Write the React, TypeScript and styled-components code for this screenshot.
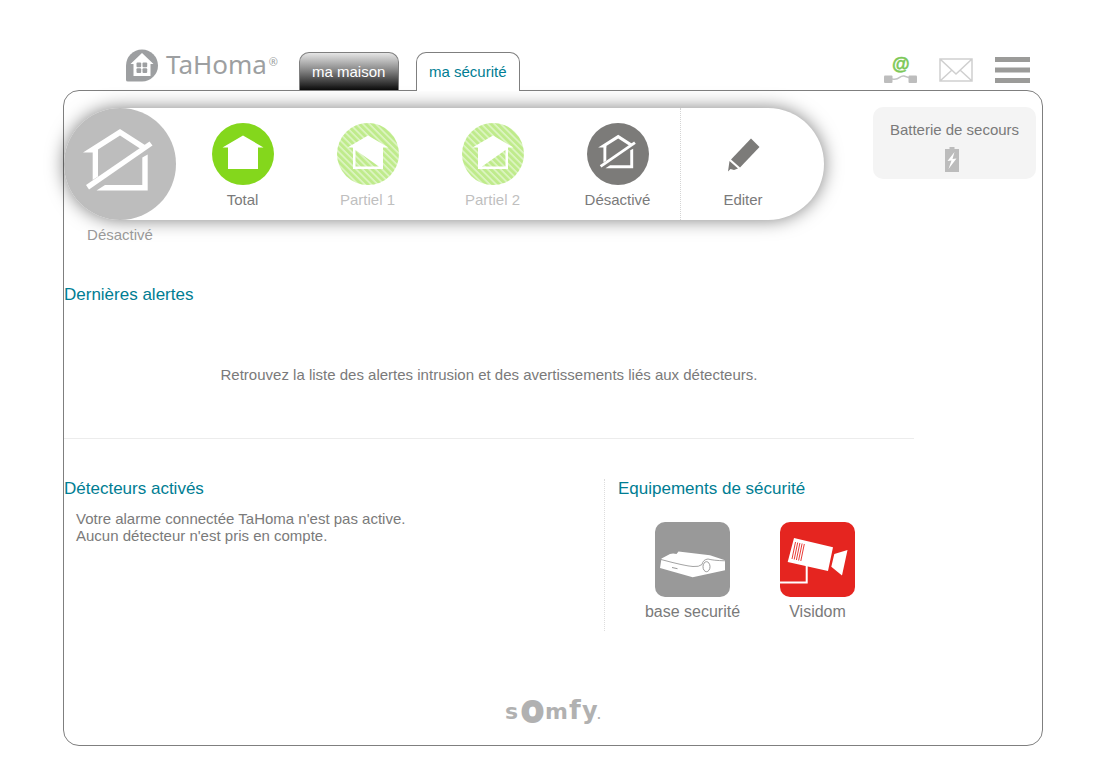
import React from "react";
import styled, { createGlobalStyle, css } from "styled-components";

const GlobalStyle = createGlobalStyle`
  * { box-sizing: border-box; }
  body {
    margin: 0;
    background: #fff;
    color: #7a7a7a;
    font: 15px/17px "Liberation Sans", Arial, sans-serif;
  }
  h1, h2, p, ul { margin: 0; padding: 0; }
  button { border: 0; padding: 0; background: none; font: inherit; color: inherit; cursor: pointer; }
  svg { display: block; }
`;

const Page = styled.div`
  padding: 49px 61px 29px 63px;
`;

const Header = styled.header`
  display: flex;
  align-items: flex-end;
  padding-right: 13px;
`;

const Brand = styled.a`
  display: flex;
  align-items: flex-start;
  width: 173px;
  margin: 0 0 8px 63px;
  gap: 8px;
  color: #9d9fa1;
  text-decoration: none;
`;

const BrandName = styled.span`
  font: 26px/30px "Noto Sans", "Open Sans", sans-serif;
  white-space: nowrap;
`;

const Registered = styled.sup`
  margin-left: 2px;
  font-size: 11px;
  line-height: 11px;
  vertical-align: 8px;
`;

const Tabs = styled.nav`
  display: flex;
  align-items: flex-end;
  gap: 17px;
`;

const Tab = styled.a<{ $active?: boolean }>`
  min-width: 100px;
  height: 38px;
  padding: 10px 12px 0;
  border: 1px solid #7f7f7f;
  border-bottom: 0;
  border-radius: 10px 10px 0 0;
  text-decoration: none;
  white-space: nowrap;
  color: #fff;
  background: linear-gradient(#e6e6e6, #8a8a8a 45%, #0c0c0c);
  ${({ $active }) =>
    $active &&
    css`
      position: relative;
      height: 39px;
      margin-bottom: -1px;
      color: #007d93;
      background: #fff;
    `}
`;

const Tools = styled.div`
  display: flex;
  align-items: center;
  gap: 22px;
  margin: 0 0 4px auto;
`;

const Panel = styled.main`
  display: flex;
  flex-direction: column;
  border: 1px solid #7f7f7f;
  border-radius: 16px;
  padding-top: 16px;
`;

const AlarmRow = styled.section`
  display: flex;
  justify-content: space-between;
  align-items: flex-start;
  gap: 48px;
  padding-right: 6px;
`;

const AlarmBlock = styled.div`
  flex: 0 1 760px;
  padding-top: 1px;
`;

const AlarmBar = styled.div`
  display: flex;
  height: 112px;
  border-radius: 56px;
  background: #fff;
  box-shadow: 0 0 18px rgba(0, 0, 0, 0.5);
`;

const StatusDisc = styled.div`
  width: 112px;
  margin-right: 4px;
  border-radius: 50%;
  background: #bdbdbd;
`;

const StatusLabel = styled.p`
  width: 112px;
  margin-top: 6px;
  text-align: center;
  color: #999;
`;

const ModeButton = styled.button<{ $faded?: boolean; $divided?: boolean }>`
  display: flex;
  flex-direction: column;
  align-items: center;
  justify-content: flex-start;
  gap: 6px;
  width: 125px;
  padding-top: 15px;
  color: ${({ $faded }) => ($faded ? "#bfbfbf" : "#7a7a7a")};
  border-left: ${({ $divided }) => ($divided ? "1px dotted #d4d4d4" : "0")};
`;

const BatteryCard = styled.aside`
  display: flex;
  flex-direction: column;
  align-items: center;
  gap: 9px;
  width: 163px;
  height: 72px;
  padding-top: 14px;
  border-radius: 10px;
  background: #f4f4f4;
`;

const Heading = styled.h2`
  font-size: 17px;
  font-weight: normal;
  line-height: 20px;
  color: #007d93;
`;

const Alerts = styled.section`
  margin: 42px 128px 0 0;
  border-bottom: 1px solid #ececec;
`;

const AlertsMessage = styled.p`
  padding: 61px 0 55px;
  text-align: center;
`;

const Columns = styled.div`
  display: flex;
  margin: 40px 128px 0 0;
  min-height: 152px;
`;

const Detectors = styled.section`
  flex: 1;
`;

const DetectorsText = styled.p`
  padding: 11px 12px;
`;

const Equipment = styled.section`
  width: 310px;
  padding-left: 13px;
  border-left: 1px dotted #ddd;
`;

const Devices = styled.ul`
  display: flex;
  padding: 23px 0 0 12px;
  list-style: none;
`;

const DeviceButton = styled.button`
  display: flex;
  flex-direction: column;
  align-items: center;
  gap: 6px;
  width: 125px;
  font-size: 16px;
  line-height: 18px;
`;

const Footer = styled.footer`
  display: flex;
  justify-content: center;
  padding: 52px 0 10px;
`;

const HouseOff = () => (
  <g fill="#fff">
    <path d="M19 44.500 L56 21 L82.500 38 L77.500 41.500 L56 27.500 L34 41.500 V44.500 Z" />
    <path d="M28.700 42 H34 V68.500 L28.700 72 Z" />
    <path d="M22 77 L85.500 33.500 L88.500 37.500 L25 81.500 Z" />
    <path d="M83.700 46.500 V82.500 H32.500 L41 77 H78.300 V49.500 Z" />
  </g>
);

const ModeIcon = ({ kind }: { kind: "total" | "left" | "right" | "off" }) => {
  const faded = kind === "left" || kind === "right";
  const stripes = `stripes-${kind}`;
  const fill = kind === "off" ? "#7c7b79" : kind === "total" ? "#84d71c" : `url(#${stripes})`;
  return (
    <svg width="62" height="62" viewBox="0 0 62 62" aria-hidden="true">
      {faded && (
        <defs>
          <pattern id={stripes} width="4.600" height="4.600" patternUnits="userSpaceOnUse" patternTransform="rotate(45)">
            <rect width="4.600" height="4.600" fill="#bfeb8b" />
            <rect width="4.600" height="1.600" fill="#dff5c6" />
          </pattern>
        </defs>
      )}
      <circle cx="31" cy="31" r="31" fill={fill} />
      {kind === "off" ? (
        <g transform="translate(0.900 0.500) scale(0.541)">
          <HouseOff />
        </g>
      ) : (
        <path d="M31 12.500 L51.500 24.500 H46 V46 H16 V24.500 H10.500 Z" fill="#fff" />
      )}
      {faded && (
        <path
          d={kind === "left" ? "M18.500 27 L42 43.500 H18.500 Z" : "M43.500 27 V43.500 H20 Z"}
          fill={`url(#${stripes})`}
        />
      )}
    </svg>
  );
};

const PencilIcon = () => (
  <svg width="62" height="62" viewBox="0 0 62 62" aria-hidden="true">
    <g fill="#7c7b79">
      <path d="M39 15.500 L47.500 24 L28 44.500 L19 36.500 Z" />
      <path d="M17.500 38 L26 45.500 L22 47 L18.500 46 L16 48.500 Z" />
    </g>
  </svg>
);

const LogoMark = () => (
  <svg width="32" height="33" viewBox="0 0 32 33" aria-hidden="true">
    <path d="M0 31 V16.500 A16 16 0 1 1 16 32.500 H2 Q0 32.500 0 31 Z" fill="#9d9fa1" />
    <path d="M16 4 L27.500 15 H24.500 V27 H7.500 V15 H4.500 Z" fill="#fff" />
    <g fill="#9d9fa1">
      <rect x="10.500" y="13.500" width="4.700" height="4.700" rx="1" />
      <rect x="16.500" y="13.500" width="4.700" height="4.700" rx="1" />
      <rect x="10.500" y="19.300" width="4.700" height="4.700" rx="1" />
      <rect x="16.500" y="19.300" width="4.700" height="4.700" rx="1" />
    </g>
  </svg>
);

const ConnectionIcon = () => (
  <svg width="33" height="32" viewBox="0 -3 33 32" aria-hidden="true">
    <text x="16.500" y="13" textAnchor="middle" fontSize="18" fontWeight="bold" fontStyle="italic" fontFamily="Liberation Sans, Arial, sans-serif" fill="#7cc857" stroke="#7cc857" strokeWidth="0.500">@</text>
    <path d="M8 22 C16 24 15 18 20 19 L26 21" fill="none" stroke="#c4c4c4" strokeWidth="1.500" />
    <rect y="18.500" width="8.500" height="7.500" rx="1" fill="#bdbdbd" />
    <rect x="24.500" y="18.500" width="8.500" height="7.500" rx="1" fill="#bdbdbd" />
  </svg>
);

const MailIcon = () => (
  <svg width="34" height="24" viewBox="0 0 34 24" aria-hidden="true">
    <path d="M1 1 H33 V23 H1 Z M1 1 L17 16 L33 1 M1 23 L13 12 M33 23 L21 12" fill="none" stroke="#cfcfcf" strokeWidth="1.500" />
  </svg>
);

const MenuIcon = () => (
  <svg width="35" height="26" viewBox="0 0 35 26" aria-hidden="true">
    <path d="M0 2.500 H35 M0 13 H35 M0 23.500 H35" stroke="#9b9b99" strokeWidth="5" />
  </svg>
);

const BatteryIcon = () => (
  <svg width="20" height="25" viewBox="0 0 20 25" aria-hidden="true">
    <path d="M0 2 H4.500 V0 H9.500 V2 H14 V25 H0 Z" fill="#bcbcbc" />
    <path d="M9.500 5 L2.500 14 L6.500 13.500 L3.500 22 L11.500 11.500 L7.500 12 Z" fill="#fff" />
  </svg>
);

const BaseDevice = () => (
  <svg width="75" height="75" viewBox="0 0 75 75" aria-hidden="true">
    <rect width="75" height="75" rx="10" fill="#999" />
    <path d="M6.500 36.500 L15 32 Q18 31 21.500 32 L23.500 29.500 L55 33.300 L70 38.300 V48.300 L37.700 55.300 L5 46 Z" fill="#fff" />
    <path d="M6 37.500 Q30 44 38 44.500 Q44 45 47 42.500 Q48 37.500 53 37 Q58 38.500 70 38.800" fill="none" stroke="#999" strokeWidth="0.900" />
    <ellipse cx="51.500" cy="44.700" rx="3.500" ry="5" fill="#fff" stroke="#999" />
    <path d="M17 45.500 L22.500 46.700" stroke="#999" />
  </svg>
);

const CameraDevice = () => (
  <svg width="75" height="75" viewBox="0 0 75 75" aria-hidden="true">
    <rect width="75" height="75" rx="10" fill="#e52520" />
    <path d="M14 16 L53 25.300 L48 49 L7.700 40 Z M54.300 32 L67.500 28 L62 53.500 L51.300 44.700 Z" fill="#fff" />
    <path d="M26.700 43 V60.500 H0" fill="none" stroke="#fff" strokeWidth="2" />
    <path
      d="M15.500 20 L12 37 M17.700 20.500 L14.200 37.500 M19.900 21 L16.400 38 M22.100 21.500 L18.600 38.500 M24.300 22 L20.800 39"
      stroke="#e52520"
      strokeWidth="0.900"
    />
  </svg>
);

const SomfyLogo = () => (
  <svg width="98" height="52" viewBox="0 -16 98 52" role="img" aria-label="somfy" fill="#b1b1b1" fontFamily="DejaVu Sans, sans-serif">
    <text y="20" fontSize="22" fontWeight="bold">
      <tspan x="1">s</tspan>
      <tspan x="18" y="22" fontSize="37" fontFamily="Lato, sans-serif" stroke="#b1b1b1" strokeWidth="4" strokeLinejoin="round" fontWeight="normal">o</tspan>
      <tspan x="41" y="20">m</tspan>
      <tspan x="65" fontSize="27">f</tspan>
      <tspan x="78" fontSize="24">y</tspan>
      <tspan x="93" fontSize="10">.</tspan>
    </text>
  </svg>
);

const App: React.FC = () => (
  <>
    <GlobalStyle />
    <Page>
      <Header>
        <Brand href="#">
          <LogoMark />
          <BrandName>TaHoma<Registered>®</Registered></BrandName>
        </Brand>
        <Tabs>
          <Tab href="#maison">ma maison</Tab>
          <Tab href="#securite" $active>ma sécurité</Tab>
        </Tabs>
        <Tools>
          <button aria-label="Connexion"><ConnectionIcon /></button>
          <button aria-label="Messages"><MailIcon /></button>
          <button aria-label="Menu"><MenuIcon /></button>
        </Tools>
      </Header>
      <Panel>
        <AlarmRow>
          <AlarmBlock>
            <AlarmBar>
              <StatusDisc>
                <svg width="112" height="112" viewBox="0 0 112 112" aria-hidden="true"><HouseOff /></svg>
              </StatusDisc>
              <ModeButton><ModeIcon kind="total" />Total</ModeButton>
              <ModeButton $faded><ModeIcon kind="left" />Partiel 1</ModeButton>
              <ModeButton $faded><ModeIcon kind="right" />Partiel 2</ModeButton>
              <ModeButton><ModeIcon kind="off" />Désactivé</ModeButton>
              <ModeButton $divided><PencilIcon />Editer</ModeButton>
            </AlarmBar>
            <StatusLabel>Désactivé</StatusLabel>
          </AlarmBlock>
          <BatteryCard>Batterie de secours<BatteryIcon /></BatteryCard>
        </AlarmRow>
        <Alerts>
          <Heading>Dernières alertes</Heading>
          <AlertsMessage>Retrouvez la liste des alertes intrusion et des avertissements liés aux détecteurs.</AlertsMessage>
        </Alerts>
        <Columns>
          <Detectors>
            <Heading>Détecteurs activés</Heading>
            <DetectorsText>
              Votre alarme connectée TaHoma n'est pas active.<br />
              Aucun détecteur n'est pris en compte.
            </DetectorsText>
          </Detectors>
          <Equipment>
            <Heading>Equipements de sécurité</Heading>
            <Devices>
              <li><DeviceButton><BaseDevice />base securité</DeviceButton></li>
              <li><DeviceButton><CameraDevice />Visidom</DeviceButton></li>
            </Devices>
          </Equipment>
        </Columns>
        <Footer><SomfyLogo /></Footer>
      </Panel>
    </Page>
  </>
);

export default App;
